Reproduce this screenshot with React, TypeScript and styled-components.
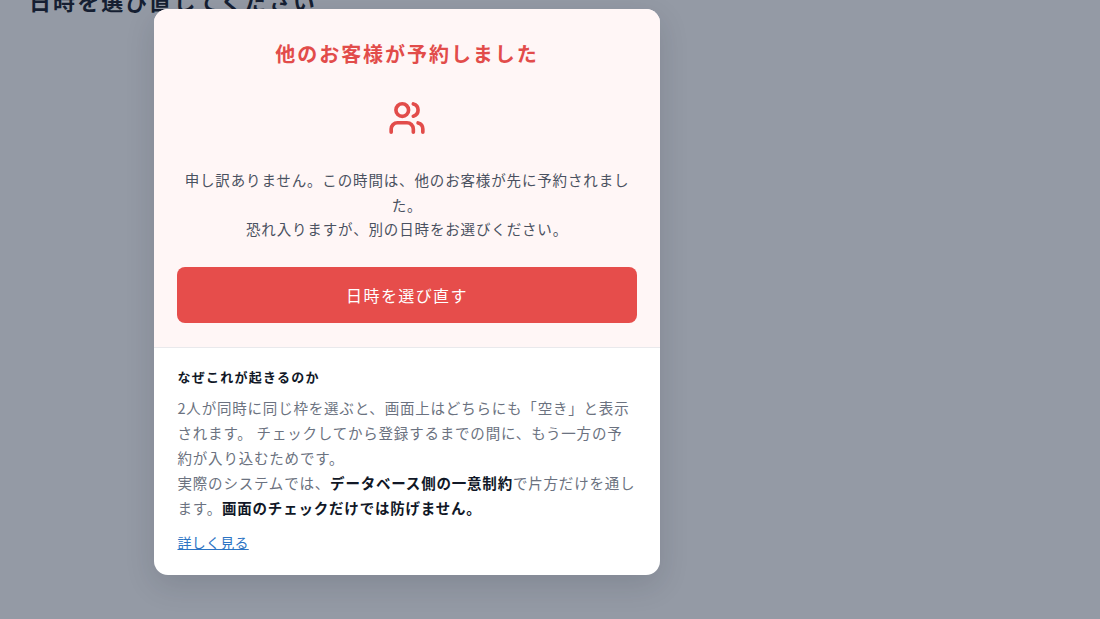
import React from 'react';
import styled, {createGlobalStyle} from 'styled-components';
import {Users} from 'lucide-react';

const GlobalStyle = createGlobalStyle`
  html, body {
    margin: 0;
    height: 100%;
    overflow: hidden;
    background: #fff;
    font-family: "Noto Sans CJK JP", "Noto Sans", sans-serif;
  }
`;

const Page = styled.div`
  position: relative;
  width: 1100px;
  height: 619px;
  overflow: hidden;
`;

const BackHeading = styled.h2`
  margin: -15px 0 0 29px;
  font-size: 22px;
  line-height: 30px;
  font-weight: 700;
  letter-spacing: 2.1px;
  color: #111827;
`;

const Overlay = styled.div`
  position: absolute;
  inset: 0;
  display: flex;
  align-items: flex-start;
  padding: 9px 0 0 154px;
  background: rgba(28, 40, 64, 0.47);
`;

const Modal = styled.div`
  width: 506px;
  border-radius: 14px;
  overflow: hidden;
  background: #fff;
  box-shadow: 0 10px 30px rgba(20, 28, 45, 0.14);
`;

const AlertPane = styled.section`
  display: flex;
  flex-direction: column;
  align-items: center;
  padding: 30px 23px 24px;
  background: #fff6f6;
  border-bottom: 1px solid #e9e9ec;
`;

const Title = styled.h3`
  margin: 0;
  font-size: 20px;
  line-height: 30px;
  font-weight: 700;
  letter-spacing: 1.95px;
  color: #e24c4a;
`;

const IconSlot = styled.div`
  display: flex;
  margin: 30px 0 31px;
  color: #e24c4a;
`;

const AlertText = styled.p`
  margin: 0;
  font-size: 14.5px;
  line-height: 24.5px;
  letter-spacing: 0.85px;
  text-align: center;
  color: #4a5160;
`;

const RetryButton = styled.button`
  width: 100%;
  height: 56px;
  margin-top: 25px;
  border: 0;
  border-radius: 8px;
  background: #e64d4b;
  color: #fff;
  font-family: inherit;
  font-size: 16px;
  font-weight: 400;
  letter-spacing: 1.4px;
`;

const InfoPane = styled.section`
  padding: 19px 23px 22px 23.5px;
`;

const InfoHeading = styled.h4`
  margin: 0 0 8px;
  font-size: 13px;
  line-height: 20px;
  font-weight: 700;
  letter-spacing: 1.25px;
  color: #111827;
`;

const InfoText = styled.p`
  margin: 0;
  font-size: 14.5px;
  line-height: 25px;
  letter-spacing: 0.8px;
  color: #6b7280;

  strong {
    font-weight: 700;
    color: #111827;
  }
`;

const MoreLink = styled.a`
  display: inline-block;
  margin-top: 12px;
  font-size: 14px;
  line-height: 20px;
  letter-spacing: 0.25px;
  color: #2c74c4;
  text-decoration: underline;
`;

export default function App(): JSX.Element {
  return (
    <Page>
      <GlobalStyle />
      <BackHeading>日時を選び直してください</BackHeading>
      <Overlay>
        <Modal>
          <AlertPane>
            <Title>他のお客様が予約しました</Title>
            <IconSlot>
              <Users size={38} strokeWidth={2.3} />
            </IconSlot>
            <AlertText>
              申し訳ありません。この時間は、他のお客様が先に予約されました。
              <br />
              恐れ入りますが、別の日時をお選びください。
            </AlertText>
            <RetryButton>日時を選び直す</RetryButton>
          </AlertPane>
          <InfoPane>
            <InfoHeading>なぜこれが起きるのか</InfoHeading>
            <InfoText>
              2人が同時に同じ枠を選ぶと、画面上はどちらにも「空き」と表示されます。
              チェックしてから登録するまでの間に、もう一方の予約が入り込むためです。
              <br />
              実際のシステムでは、<strong>データベース側の一意制約</strong>で片方だけを通します。
              <strong>画面のチェックだけでは防げません。</strong>
            </InfoText>
            <MoreLink href="#">詳しく見る</MoreLink>
          </InfoPane>
        </Modal>
      </Overlay>
    </Page>
  );
}
